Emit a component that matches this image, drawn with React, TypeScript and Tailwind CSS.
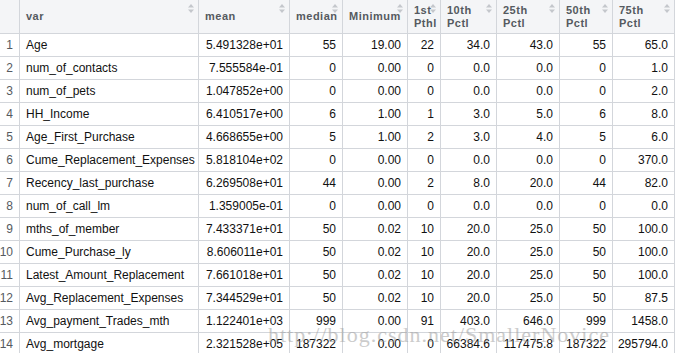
import React from 'react';

const cols = [
  { key: 'n', label: '', w: 20 },
  { key: 'var', label: 'var', w: 179, left: true },
  { key: 'mean', label: 'mean', w: 91 },
  { key: 'median', label: 'median', w: 53 },
  { key: 'min', label: 'Minimum', w: 65 },
  { key: 'p1', label: '1st Pthl', w: 33 },
  { key: 'p10', label: '10th Pctl', w: 56 },
  { key: 'p25', label: '25th Pctl', w: 63 },
  { key: 'p50', label: '50th Pctl', w: 53 },
  { key: 'p75', label: '75th Pctl', w: 62 },
];

const rows: string[][] = [
  ['Age', '5.491328e+01', '55', '19.00', '22', '34.0', '43.0', '55', '65.0'],
  ['num_of_contacts', '7.555584e-01', '0', '0.00', '0', '0.0', '0.0', '0', '1.0'],
  ['num_of_pets', '1.047852e+00', '0', '0.00', '0', '0.0', '0.0', '0', '2.0'],
  ['HH_Income', '6.410517e+00', '6', '1.00', '1', '3.0', '5.0', '6', '8.0'],
  ['Age_First_Purchase', '4.668655e+00', '5', '1.00', '2', '3.0', '4.0', '5', '6.0'],
  ['Cume_Replacement_Expenses', '5.818104e+02', '0', '0.00', '0', '0.0', '0.0', '0', '370.0'],
  ['Recency_last_purchase', '6.269508e+01', '44', '0.00', '2', '8.0', '20.0', '44', '82.0'],
  ['num_of_call_lm', '1.359005e-01', '0', '0.00', '0', '0.0', '0.0', '0', '0.0'],
  ['mths_of_member', '7.433371e+01', '50', '0.02', '10', '20.0', '25.0', '50', '100.0'],
  ['Cume_Purchase_ly', '8.606011e+01', '50', '0.02', '10', '20.0', '25.0', '50', '100.0'],
  ['Latest_Amount_Replacement', '7.661018e+01', '50', '0.02', '10', '20.0', '25.0', '50', '100.0'],
  ['Avg_Replacement_Expenses', '7.344529e+01', '50', '0.02', '10', '20.0', '25.0', '50', '87.5'],
  ['Avg_payment_Trades_mth', '1.122401e+03', '999', '0.00', '91', '403.0', '646.0', '999', '1458.0'],
  ['Avg_mortgage', '2.321528e+05', '187322', '0.00', '0', '66384.6', '117475.8', '187322', '295794.0'],
];

const SortIcon = () => (
  <svg width="6" height="9" viewBox="0 0 6 9" className="absolute right-[4px] top-[4px]">
    <path d="M3 0 L6 3.5 L0 3.5 Z" fill="#c4c7cc" />
    <path d="M3 9 L6 5.5 L0 5.5 Z" fill="#c4c7cc" />
  </svg>
);

export default function App() {
  return (
    <div
      className="relative w-[675px] h-[353px] overflow-hidden bg-white"
      style={{ fontFamily: '"Liberation Sans", Arial, sans-serif' }}
    >
      <div className="grid grid-cols-[20px_179px_91px_53px_65px_33px_56px_63px_53px_62px]">
        {cols.map((c) => (
          <div
            key={c.key}
            className="relative h-[34px] bg-[#f4f5f7] border-r border-b border-[#d3d6db] flex items-center pl-[6px] pr-[8px] text-[11px] leading-[13px] font-bold tracking-[0.5px] text-[#555a60]"
          >
            {c.key === 'p1' ? (
              <span className="pl-[0px]">1st<br />Pthl</span>
            ) : c.label.includes(' ') ? (
              <span>
                {c.label.split(' ')[0]}
                <br />
                {c.label.split(' ')[1]}
              </span>
            ) : (
              <span>{c.label}</span>
            )}
            {c.key !== 'n' && <SortIcon />}
          </div>
        ))}
        {rows.map((r, i) => (
          <React.Fragment key={i}>
            <div className="h-[23px] border-r border-b border-[#d3d6db] flex items-center justify-end pr-[6px] text-[12px] text-[#555a60]">
              {i + 1}
            </div>
            {r.map((v, j) => (
              <div
                key={j}
                className={
                  'h-[23px] border-r border-b border-[#d3d6db] flex items-center text-[12px] text-[#111] whitespace-nowrap ' +
                  (j === 0 ? 'justify-start pl-[6px]' : 'justify-end pr-[6px]')
                }
              >
                {v}
              </div>
            ))}
          </React.Fragment>
        ))}
      </div>
      <div
        className="absolute left-[268px] top-[318px] text-[22px] tracking-[1px] text-[#9a9a9a] opacity-50 whitespace-nowrap pointer-events-none"
        style={{ fontFamily: '"Liberation Serif", "Times New Roman", serif' }}
      >
        http://blog.csdn.net/SmallerNovice
      </div>
    </div>
  );
}
